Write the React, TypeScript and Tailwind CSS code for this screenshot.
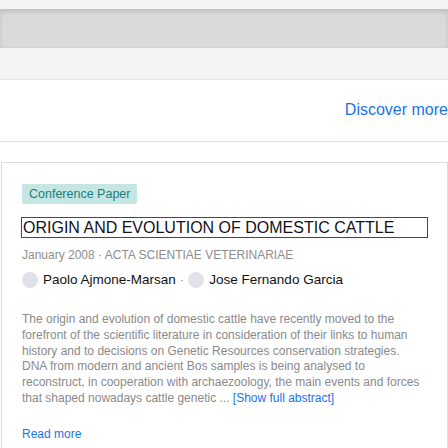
import React from 'react';

const AUTHORS = ['Paolo Ajmone-Marsan', 'Jose Fernando Garcia'];

const App: React.FC = () => {
  return (
    <div className="w-[448px] h-[448px] overflow-hidden bg-white font-['Liberation_Sans',Arial,sans-serif]">
      {/* top bands */}
      <div className="h-[9px] bg-[#f3f3f3]"></div>
      <div className="h-[39px] bg-[#dadada] shadow-[inset_0_3px_4px_rgba(0,0,0,0.12)] border-b border-[#d2d2d2]"></div>
      <div className="h-[32px] bg-[#f3f3f3] border-b border-[#e2e2e2]"></div>

      <div className="h-[61px] pt-[21px] flex justify-end">
        <span className="text-[16px] leading-[18px] text-[#1a73e8]">Discover more</span>
      </div>
      <div className="h-px bg-[#dedede]"></div>

      <div className="mt-[20px] ml-px w-[447px] border border-[#dddddd] pl-[20px] pt-[18px] pb-6">
        <span className="inline-block h-[20px] px-[7px] rounded-[2px] bg-[#c5e7e4] text-[#1f7c80] text-[12.5px] leading-[20px]">
          Conference Paper
        </span>

        <div className="mt-[12px] -ml-px w-[407px] h-[21px] border border-[#e8000b] pl-[1px] text-[16px] leading-[19px] text-[#111122]">
          ORIGIN AND EVOLUTION OF DOMESTIC CATTLE
        </div>

        <div className="mt-[9px] text-[12px] leading-[16px] text-[#8e8e8e]">
          January 2008 · ACTA SCIENTIAE VETERINARIAE
        </div>

        <div className="mt-[8px] flex items-center text-[13.5px] leading-[18px] text-[#111111]">
          {AUTHORS.map((name, i) => (
            <React.Fragment key={name}>
              {i > 0 && <span className="text-[#8e8e8e] px-[4px]">·</span>}
              <span className="flex items-center gap-[5px]">
                <span className="w-[16px] h-[16px] rounded-full bg-[#e1e1ea]"></span>
                {name}
              </span>
            </React.Fragment>
          ))}
        </div>

        <p className="mt-[23px] w-[398px] text-[12px] leading-[15.8px] text-[#8a8a8a]">
          The origin and evolution of domestic cattle have recently moved to the forefront of the scientific
          literature in consideration of their links to human history and to decisions on Genetic Resources
          conservation strategies. DNA from modern and ancient Bos samples is being analysed to reconstruct, in
          cooperation with archaezoology, the main events and forces that shaped nowadays cattle genetic ...{' '}
          <span className="text-[#1a73e8]">[Show full abstract]</span>
        </p>

        <div className="mt-[19px] text-[12px] leading-[16px] text-[#1a73e8]">Read more</div>
      </div>
    </div>
  );
};

export default App;
